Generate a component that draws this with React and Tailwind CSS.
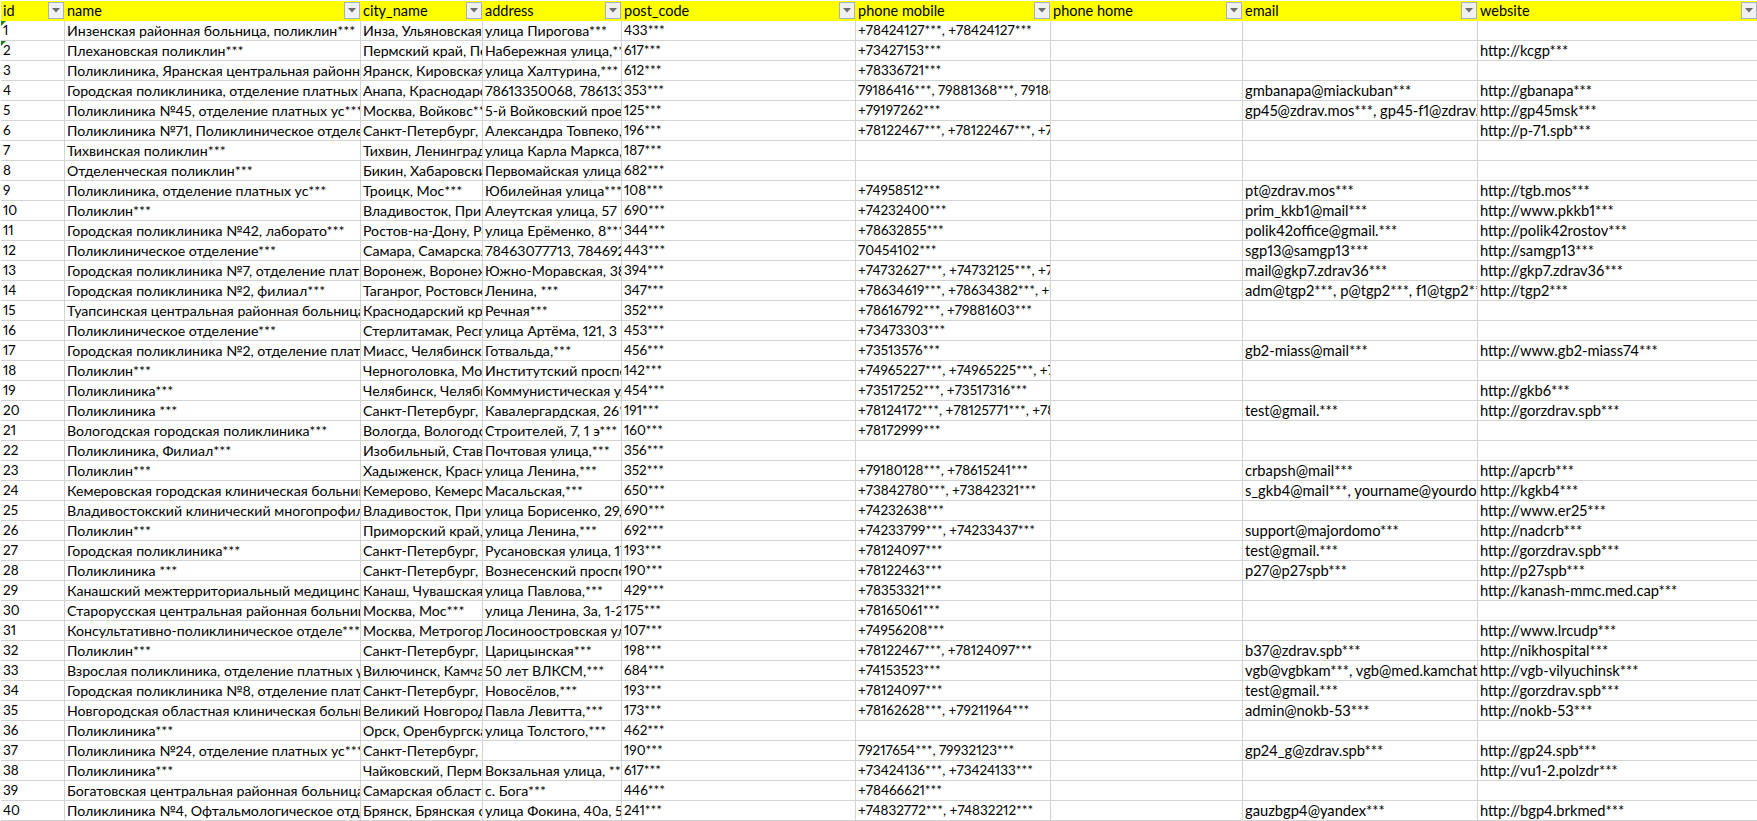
const columns = [
  "id",
  "name",
  "city_name",
  "address",
  "post_code",
  "phone mobile",
  "phone home",
  "email",
  "website",
];

const rows = [
  ["1", "Инзенская районная больница, поликлин***", "Инза, Ульяновская обл", "улица Пирогова***", "433***", "+78424127***, +78424127***", "", "", ""],
  ["2", "Плехановская поликлин***", "Пермский край, Пермь", "Набережная улица,***", "617***", "+73427153***", "", "", "http://kcgp***"],
  ["3", "Поликлиника, Яранская центральная районная", "Яранск, Кировская обл", "улица Халтурина,***", "612***", "+78336721***", "", "", ""],
  ["4", "Городская поликлиника, отделение платных услуг", "Анапа, Краснодарский", "78613350068, 78613350068", "353***", "79186416***, 79881368***, 79186416", "", "gmbanapa@miackuban***", "http://gbanapa***"],
  ["5", "Поликлиника №45, отделение платных ус***", "Москва, Войковс***", "5-й Войковский проезд", "125***", "+79197262***", "", "gp45@zdrav.mos***, gp45-f1@zdrav.mos", "http://gp45msk***"],
  ["6", "Поликлиника №71, Поликлиническое отделение", "Санкт-Петербург, Невский", "Александра Товпеко, 10", "196***", "+78122467***, +78122467***, +78122467", "", "", "http://p-71.spb***"],
  ["7", "Тихвинская поликлин***", "Тихвин, Ленинградская", "улица Карла Маркса,***", "187***", "", "", "", ""],
  ["8", "Отделенческая поликлин***", "Бикин, Хабаровский край", "Первомайская улица***", "682***", "", "", "", ""],
  ["9", "Поликлиника, отделение платных ус***", "Троицк, Мос***", "Юбилейная улица***", "108***", "+74958512***", "", "pt@zdrav.mos***", "http://tgb.mos***"],
  ["10", "Поликлин***", "Владивосток, Приморский", "Алеутская улица, 57 к1", "690***", "+74232400***", "", "prim_kkb1@mail***", "http://www.pkkb1***"],
  ["11", "Городская поликлиника №42, лаборато***", "Ростов-на-Дону, Ростовская", "улица Ерёменко, 8***", "344***", "+78632855***", "", "polik42office@gmail.***", "http://polik42rostov***"],
  ["12", "Поликлиническое отделение***", "Самара, Самарская обл", "78463077713, 78469201713", "443***", "70454102***", "", "sgp13@samgp13***", "http://samgp13***"],
  ["13", "Городская поликлиника №7, отделение платных", "Воронеж, Воронежская", "Южно-Моравская, 38а", "394***", "+74732627***, +74732125***, +74732125", "", "mail@gkp7.zdrav36***", "http://gkp7.zdrav36***"],
  ["14", "Городская поликлиника №2, филиал***", "Таганрог, Ростовская", "Ленина, ***", "347***", "+78634619***, +78634382***, +78634382", "", "adm@tgp2***, p@tgp2***, f1@tgp2***", "http://tgp2***"],
  ["15", "Туапсинская центральная районная больница,", "Краснодарский край", "Речная***", "352***", "+78616792***, +79881603***", "", "", ""],
  ["16", "Поликлиническое отделение***", "Стерлитамак, Республика", "улица Артёма, 121, 3 к", "453***", "+73473303***", "", "", ""],
  ["17", "Городская поликлиника №2, отделение платных", "Миасс, Челябинская", "Готвальда,***", "456***", "+73513576***", "", "gb2-miass@mail***", "http://www.gb2-miass74***"],
  ["18", "Поликлин***", "Черноголовка, Московская", "Институтский проспект", "142***", "+74965227***, +74965225***, +74965225", "", "", ""],
  ["19", "Поликлиника***", "Челябинск, Челябинская", "Коммунистическая улица", "454***", "+73517252***, +73517316***", "", "", "http://gkb6***"],
  ["20", "Поликлиника ***", "Санкт-Петербург, Центральный", "Кавалергардская, 26***", "191***", "+78124172***, +78125771***, +78125771", "", "test@gmail.***", "http://gorzdrav.spb***"],
  ["21", "Вологодская городская поликлиника***", "Вологда, Вологодская", "Строителей, 7, 1 э***", "160***", "+78172999***", "", "", ""],
  ["22", "Поликлиника, Филиал***", "Изобильный, Ставропольский", "Почтовая улица,***", "356***", "", "", "", ""],
  ["23", "Поликлин***", "Хадыженск, Краснодарский", "улица Ленина,***", "352***", "+79180128***, +78615241***", "", "crbapsh@mail***", "http://apcrb***"],
  ["24", "Кемеровская городская клиническая больница", "Кемерово, Кемеровская", "Масальская,***", "650***", "+73842780***, +73842321***", "", "s_gkb4@mail***, yourname@yourdomain", "http://kgkb4***"],
  ["25", "Владивостокский клинический многопрофильный", "Владивосток, Приморский", "улица Борисенко, 29, 1", "690***", "+74232638***", "", "", "http://www.er25***"],
  ["26", "Поликлин***", "Приморский край, г", "улица Ленина,***", "692***", "+74233799***, +74233437***", "", "support@majordomo***", "http://nadcrb***"],
  ["27", "Городская поликлиника***", "Санкт-Петербург, Невский", "Русановская улица, 17", "193***", "+78124097***", "", "test@gmail.***", "http://gorzdrav.spb***"],
  ["28", "Поликлиника ***", "Санкт-Петербург, Адмиралтейский", "Вознесенский проспект", "190***", "+78122463***", "", "p27@p27spb***", "http://p27spb***"],
  ["29", "Канашский межтерриториальный медицинский", "Канаш, Чувашская Республика", "улица Павлова,***", "429***", "+78353321***", "", "", "http://kanash-mmc.med.cap***"],
  ["30", "Старорусская центральная районная больница", "Москва, Мос***", "улица Ленина, 3а, 1-2 э", "175***", "+78165061***", "", "", ""],
  ["31", "Консультативно-поликлиническое отделе***", "Москва, Метрогородок", "Лосиноостровская улица", "107***", "+74956208***", "", "", "http://www.lrcudp***"],
  ["32", "Поликлин***", "Санкт-Петербург, Приморский", "Царицынская***", "198***", "+78122467***, +78124097***", "", "b37@zdrav.spb***", "http://nikhospital***"],
  ["33", "Взрослая поликлиника, отделение платных услуг", "Вилючинск, Камчатский", "50 лет ВЛКСМ,***", "684***", "+74153523***", "", "vgb@vgbkam***, vgb@med.kamchatka", "http://vgb-vilyuchinsk***"],
  ["34", "Городская поликлиника №8, отделение платных", "Санкт-Петербург, Невский", "Новосёлов,***", "193***", "+78124097***", "", "test@gmail.***", "http://gorzdrav.spb***"],
  ["35", "Новгородская областная клиническая больница", "Великий Новгород, Новгородская", "Павла Левитта,***", "173***", "+78162628***, +79211964***", "", "admin@nokb-53***", "http://nokb-53***"],
  ["36", "Поликлиника***", "Орск, Оренбургская", "улица Толстого,***", "462***", "", "", "", ""],
  ["37", "Поликлиника №24, отделение платных ус***", "Санкт-Петербург, Адмиралтейский", "", "190***", "79217654***, 79932123***", "", "gp24_g@zdrav.spb***", "http://gp24.spb***"],
  ["38", "Поликлиника***", "Чайковский, Пермский", "Вокзальная улица, ***", "617***", "+73424136***, +73424133***", "", "", "http://vu1-2.polzdr***"],
  ["39", "Богатовская центральная районная больница,", "Самарская область, с", "с. Бога***", "446***", "+78466621***", "", "", ""],
  ["40", "Поликлиника №4, Офтальмологическое отделение", "Брянск, Брянская обл", "улица Фокина, 40а, 5 э", "241***", "+74832772***, +74832212***", "", "gauzbgp4@yandex***", "http://bgp4.brkmed***"],
];

const gridCols = "grid grid-cols-[64px_296px_122px_139px_234px_195px_192px_235px_280px]";

// cyrillic, digits and latin run differently in Lato, so size per column
const cellText = [
  "text-[13.5px]",
  "text-[14.15px]",
  "text-[14.15px]",
  "text-[14.15px]",
  "text-[13.5px]",
  "text-[13.5px]",
  "text-[14px]",
  "text-[14.7px]",
  "text-[14.7px]",
];

// excel filter dropdown button
const FilterButton = () => (
  <span className="absolute right-px top-[1px] flex h-[17px] w-[16px] items-center justify-center border border-[#a9b0c0] bg-[#f0f0f0]">
    <svg width="8" height="5" viewBox="0 0 8 5">
      <path d="M0 0h8L4 4.5z" fill="#6d6d6d" />
    </svg>
  </span>
);

export default function App() {
  return (
    <div className="h-[821px] w-[1757px] overflow-hidden bg-white pl-px pt-px font-['Lato','Open_Sans',sans-serif] text-black proportional-nums">
      <div className={`${gridCols} h-[20px] bg-[#ffff00]`}>
        {columns.map((col) => (
          <div key={col} className="relative h-[20px] overflow-hidden whitespace-nowrap pl-[2px] text-[14.5px] leading-[20px]">
            {col}
            <FilterButton />
          </div>
        ))}
      </div>
      {rows.map((row) => (
        <div key={row[0]} className={`${gridCols} h-[20px]`}>
          {row.map((cell, i) => (
            <div
              key={i}
              className={`relative h-[20px] overflow-hidden whitespace-nowrap border-b border-r border-[#d4d4d4] pl-[2px] leading-[19px] ${cellText[i]}`}
            >
              {i === 0 && Number(row[0]) < 3 && (
                <span className="absolute left-0 top-0 h-0 w-0 border-r-[5px] border-t-[5px] border-r-transparent border-t-[#1e7e22]" />
              )}
              {cell}
            </div>
          ))}
        </div>
      ))}
    </div>
  );
}
